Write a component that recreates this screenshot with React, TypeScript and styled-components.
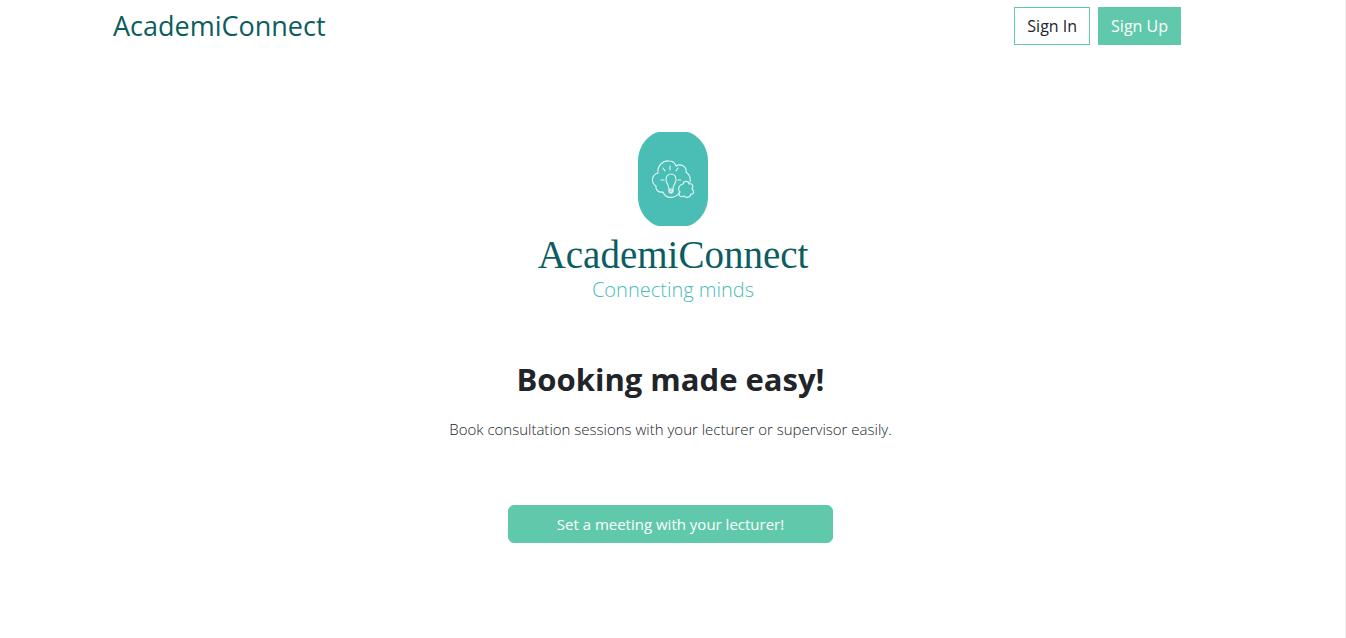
import React from "react";
import styled, { createGlobalStyle } from "styled-components";

const GlobalStyle = createGlobalStyle`
  *, *::before, *::after { box-sizing: border-box; }
  body {
    margin: 0;
    background: #ffffff;
    color: #212529;
    font-family: "Segoe UI", "Open Sans", "Noto Sans", sans-serif;
    font-size: 15px;
    line-height: 24px;
  }
`;

const Page = styled.div`
  display: flex;
  flex-direction: column;
  min-height: 100vh;
  box-shadow: inset -1px 0 0 #eeeeee;
`;

const Header = styled.header`
  display: flex;
  align-items: center;
  justify-content: space-between;
  width: 100%;
  max-width: 1140px;
  margin: 0 auto;
  padding: 7px 62px 7px 10px;
`;

const Brand = styled.a`
  color: #0b5d60;
  font-size: 27px;
  line-height: 38px;
  text-decoration: none;
`;

const Nav = styled.nav`
  display: flex;
  gap: 8px;
  font-size: 16px;
`;

const Button = styled.button<{ $outline?: boolean }>`
  height: 38px;
  padding: 0 12px;
  border: 1px solid #61c9ab;
  background: ${(p) => (p.$outline ? "#ffffff" : "#61c9ab")};
  color: ${(p) => (p.$outline ? "#212529" : "#ffffff")};
  font: inherit;
  white-space: nowrap;
  cursor: pointer;
`;

const Hero = styled.main`
  display: flex;
  flex-direction: column;
  align-items: center;
  padding: 80px 16px 32px;
  text-align: center;
`;

const Logo = styled.div`
  display: flex;
  flex-direction: column;
  align-items: center;
`;

const LogoMark = styled.svg`
  display: block;
  width: 70px;
  height: 94px;
`;

const Wordmark = styled.span`
  margin-top: 6px;
  color: #0b5d60;
  font-family: "Liberation Serif", serif;
  font-size: 39px;
  line-height: 46px;
`;

const Tagline = styled.span`
  color: #4abdb5;
  font-size: 20px;
  font-weight: 300;
  line-height: 24px;
`;

const Intro = styled.section`
  display: flex;
  flex-direction: column;
  align-items: center;
  margin: 57px 5px 0 0;
`;

const Title = styled.h1`
  margin: 0;
  font-size: 31px;
  font-weight: 700;
  line-height: 40px;
`;

const Lead = styled.p`
  margin: 18px 0 64px;
  font-weight: 300;
`;

const CallToAction = styled(Button)`
  width: 325px;
  max-width: 100%;
  border-radius: 6px;
`;

export default function App() {
  return (
    <>
      <GlobalStyle />
      <Page>
        <Header>
          <Brand href="#">AcademiConnect</Brand>
          <Nav aria-label="Account">
            <Button type="button" $outline>Sign In</Button>
            <Button type="button">Sign Up</Button>
          </Nav>
        </Header>
        <Hero>
          <Logo>
            <LogoMark viewBox="0 0 70 94" aria-hidden="true">
              <path
                d="M21 0H49C57 1 70 12 70 29V65C70 82 57 93 49 94H21C13 93 0 82 0 65V29C0 12 13 1 21 0Z"
                fill="#4abdb5"
              />
              <g fill="none" stroke="#e4f7f4" strokeWidth="1.1" strokeLinecap="round" strokeLinejoin="round">
                <path d="M41 61C38 66 28 68 25 60C20 61 17 57 18 54C13 51 13 43 20 41C19 34 25 28 31 29C34 29 37 31 38 34C43 31 49 35 48 40C52 43 53 46 52 50" />
                <path d="M45 52C46 48 51 49 51 52C54 51 56 54 54 57C57 60 55 63 53 62C52 66 48 66 46 64C42 66 40 63 42 60C39 57 41 53 45 52Z" />
                <path d="M31 57C31 53 28 51 28 48C28 44 30 42 33 42C36 42 38 44 38 48C38 51 35 53 35 57Z" />
                <path d="M31 57V60H35V57M31 58L35 59M32 61H34M32 34V38M25 36L27 39M40 36L38 39M23 48H26M40 48H43" />
              </g>
            </LogoMark>
            <Wordmark>AcademiConnect</Wordmark>
            <Tagline>Connecting minds</Tagline>
          </Logo>
          <Intro>
            <Title>Booking made easy!</Title>
            <Lead>Book consultation sessions with your lecturer or supervisor easily.</Lead>
            <CallToAction type="button">Set a meeting with your lecturer!</CallToAction>
          </Intro>
        </Hero>
      </Page>
    </>
  );
}
